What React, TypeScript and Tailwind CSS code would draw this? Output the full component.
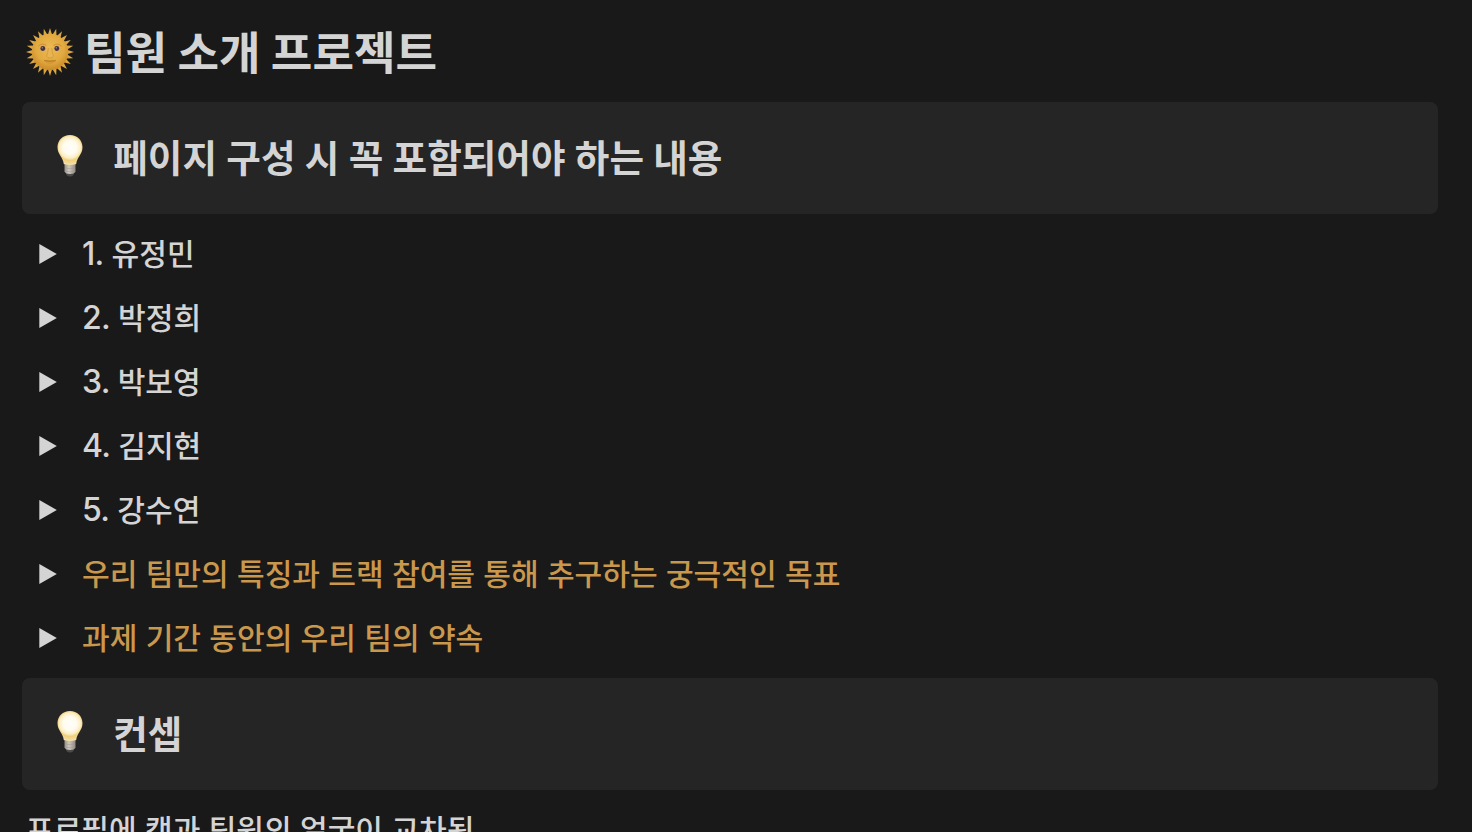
import React from 'react';

type ToggleItem = {
  num?: string;
  text: string;
  accent?: boolean;
};

const members: ToggleItem[] = [
  { num: '1.', text: '유정민' },
  { num: '2.', text: '박정희' },
  { num: '3.', text: '박보영' },
  { num: '4.', text: '김지현' },
  { num: '5.', text: '강수연' },
  { text: '우리 팀만의 특징과 트랙 참여를 통해 추구하는 궁극적인 목표', accent: true },
  { text: '과제 기간 동안의 우리 팀의 약속', accent: true },
];

const RAYS = 24;

// Sun with a face
const SunIcon = () => {
  const points = Array.from({ length: RAYS * 2 }, (_, i) => {
    const angle = (Math.PI * i) / RAYS - Math.PI / 2;
    const r = i % 2 === 0 ? 24 : 17;
    return `${(24 + r * Math.cos(angle)).toFixed(2)},${(24 + r * Math.sin(angle)).toFixed(2)}`;
  }).join(' ');

  return (
    <svg viewBox="0 0 48 48" className="mt-0.5 w-12 h-12 shrink-0">
      <defs>
        <radialGradient id="sunFace" cx="0.5" cy="0.4" r="0.6">
          <stop offset="0" stopColor="#ecba55" />
          <stop offset="0.65" stopColor="#e2a93f" />
          <stop offset="1" stopColor="#c98a28" />
        </radialGradient>
      </defs>
      <polygon points={points} fill="#d9a643" />
      <circle cx="24" cy="24" r="18.2" fill="url(#sunFace)" />
      <path d="M12.5 18 Q16.5 14.5 20.5 17.5M27.5 17.5 Q31.5 14.5 35.5 18" fill="none" stroke="#c98f30" strokeWidth="1" />
      <ellipse cx="16.8" cy="20.5" rx="3.3" ry="2.3" fill="#c9a878" />
      <ellipse cx="31" cy="20.5" rx="3.3" ry="2.3" fill="#c9a878" />
      <circle cx="16.8" cy="20.5" r="2.4" fill="#43303c" />
      <circle cx="30.8" cy="20.5" r="2.4" fill="#43303c" />
      <circle cx="16.2" cy="19.8" r="0.6" fill="#d8ccd0" />
      <circle cx="30.2" cy="19.8" r="0.6" fill="#d8ccd0" />
      <path d="M22.3 20 Q22 25 20.5 28 Q21.5 30 24 30 Q26.5 30 27.5 28 Q26 25 25.7 20" fill="#e9b552" stroke="#c98f30" strokeWidth="0.6" />
      <path d="M18 32.5 Q21 31.3 24 32 Q27 31.3 30 32.5 Q27 36.3 24 36.3 Q21 36.3 18 32.5Z" fill="#d69a36" />
      <path d="M18 32.6 Q24 34 30 32.6" fill="none" stroke="#a66b22" strokeWidth="0.7" />
    </svg>
  );
};

const BulbIcon = () => (
  <svg viewBox="0 0 28 44" className="w-7 h-11 shrink-0">
    <defs>
      <radialGradient id="bulbGlass" gradientUnits="userSpaceOnUse" cx="14" cy="13.5" r="17">
        <stop offset="0" stopColor="#fffefb" />
        <stop offset="0.4" stopColor="#fffbee" />
        <stop offset="0.62" stopColor="#fbeec2" />
        <stop offset="0.76" stopColor="#f0cf7c" />
        <stop offset="1" stopColor="#f3dfa8" />
      </radialGradient>
      <linearGradient id="bulbBase" x1="0" x2="1">
        <stop offset="0" stopColor="#99928a" />
        <stop offset="0.4" stopColor="#cfc9c2" />
        <stop offset="1" stopColor="#8f8982" />
      </linearGradient>
    </defs>
    <path d="M9.5 37.5 H18.5 L17.5 41 Q14 44 10.5 41Z" fill="#4d4b49" />
    <path d="M8.5 29.5 H19.5 V37.5 Q18.5 40 14 40 Q9.5 40 8.5 37.5Z" fill="url(#bulbBase)" />
    <path d="M9 34 Q14 35.5 19 34M9 37 Q14 38.5 19 37" fill="none" stroke="#9c968f" strokeWidth="0.5" />
    <path d="M14 1 C6.8 1 1.5 6.3 1.5 13.3 C1.5 20.5 7 23 7.8 30 Q14 32 20.2 30 C21 23 26.5 20.5 26.5 13.3 C26.5 6.3 21.2 1 14 1Z" fill="url(#bulbGlass)" />
  </svg>
);

const Callout = ({ title }: { title: string }) => (
  <div className="flex h-28 items-center rounded-lg bg-[#252525] pl-[34px]">
    <div className="pb-1">
      <BulbIcon />
    </div>
    <h2 className="pb-1 pl-[29.3px] text-[37.6px] leading-none font-bold whitespace-nowrap [word-spacing:0.8px]">{title}</h2>
  </div>
);

const Toggle = ({ num, text, accent }: ToggleItem) => (
  <li className="flex h-16 items-center">
    <svg viewBox="0 0 18 20" className="ml-[17px] h-5 w-[18px] shrink-0">
      <path d="M0.3 0 L17.8 10 L0.3 20Z" fill="#d4d4d4" />
    </svg>
    <div className={`flex items-start pb-1 pl-[25px] text-[30.1px] leading-8 font-medium whitespace-nowrap [word-spacing:1.5px] ${accent ? 'text-[#ca984d]' : ''}`}>
      {num && <span className="mr-[8px] pt-[3px] font-['Inter'] text-[32px] leading-8 tracking-[-0.7px]">{num}</span>}
      <span className={num ? 'pt-px' : ''}>{text}</span>
    </div>
  </li>
);

const App = () => (
  <div className="h-screen overflow-hidden bg-[#191919] pr-[34px] pl-[22px] font-['Noto_Sans_CJK_KR',sans-serif] text-[#d4d4d4]">
    <header className="flex h-[102px] items-center pl-1">
      <SunIcon />
      <h1 className="pb-px pl-[10px] text-[45.2px] leading-none font-bold whitespace-nowrap">팀원 소개 프로젝트</h1>
    </header>

    <Callout title="페이지 구성 시 꼭 포함되어야 하는 내용" />

    <ul className="py-2">
      {members.map((item) => (
        <Toggle key={item.text} {...item} />
      ))}
    </ul>

    <Callout title="컨셉" />

    <p className="mt-2 flex h-16 items-center pb-1 pl-1 text-[30.1px] leading-none font-medium whitespace-nowrap [word-spacing:1.5px]">
      프로필에 캠과 팀원의 얼굴이 교차됨
    </p>
  </div>
);

export default App;
